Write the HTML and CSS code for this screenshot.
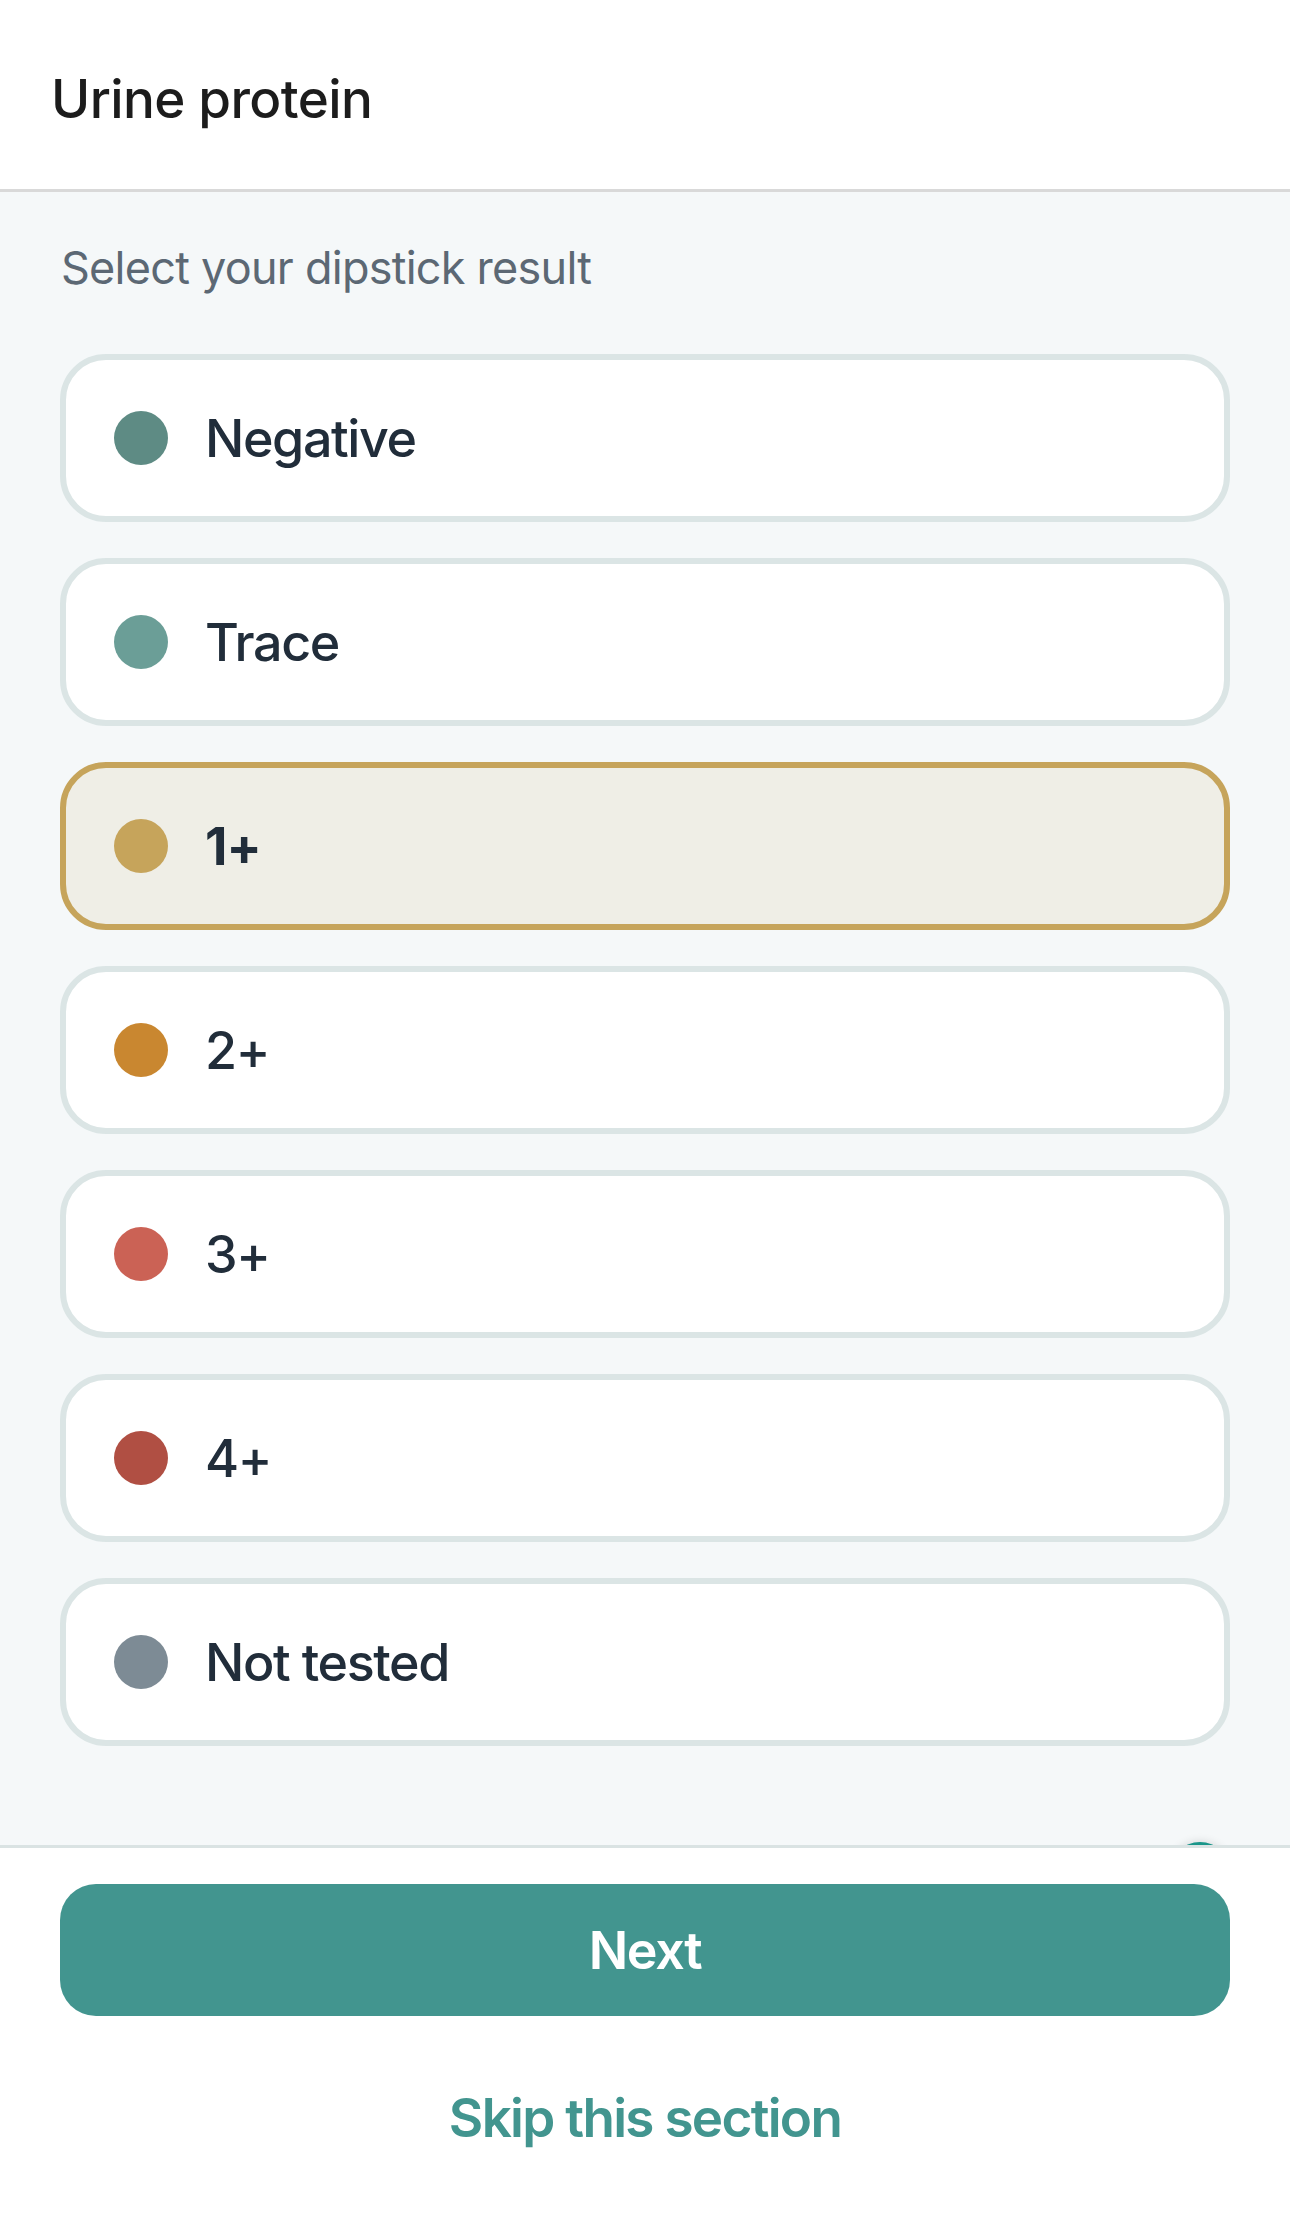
FILE: index.html
```html
<!DOCTYPE html>
<html lang="en">
<head>
    <meta charset="UTF-8">
    <meta name="viewport" content="width=device-width, initial-scale=1.0">
    <title>Urine protein</title>
    <link rel="stylesheet" href="styles.css">
</head>
<body>

<div class="page">
    <header class="topbar">
        <h1 class="title">Urine protein</h1>
    </header>

    <main class="content">
        <p class="prompt">Select your dipstick result</p>
        <div class="options">
            <button class="option"><span class="dot dot-negative"></span>Negative</button>
            <button class="option"><span class="dot dot-trace"></span>Trace</button>
            <button class="option selected"><span class="dot dot-one"></span>1+</button>
            <button class="option"><span class="dot dot-two"></span>2+</button>
            <button class="option"><span class="dot dot-three"></span>3+</button>
            <button class="option"><span class="dot dot-four"></span>4+</button>
            <button class="option"><span class="dot dot-none"></span>Not tested</button>
        </div>
        <div class="fab"></div>
    </main>

    <footer class="actions">
        <button class="next">Next</button>
        <button class="skip">Skip this section</button>
    </footer>
</div>

</body>
</html>
```

FILE: styles.css
```css
* {
    box-sizing: border-box;
}
body {
    margin: 0;
    font-family: Inter, "Noto Sans", sans-serif;
    background-color: #fff;
}
.page {
    height: 2220px;
    display: flex;
    flex-direction: column;
}
.topbar {
    height: 192px;
    flex-shrink: 0;
    display: flex;
    align-items: center;
    padding: 0 51px;
    background-color: #fff;
    border-bottom: 3px solid #d9d9d9;
}
.title {
    margin: 8px 0 0;
    font-size: 53px;
    font-weight: 500;
    letter-spacing: -0.6px;
    color: #1c1c1c;
}
.content {
    position: relative;
    flex: 1;
    overflow: hidden;
    background-color: #f5f8f9;
    padding: 49px 60px 0;
}
.prompt {
    margin: 0 0 59px 1px;
    font-size: 45px;
    line-height: 54px;
    letter-spacing: -0.75px;
    color: #5c6874;
}
.options {
    display: flex;
    flex-direction: column;
    gap: 36px;
}
.option {
    height: 168px;
    display: flex;
    align-items: center;
    gap: 37px;
    padding: 0 48px;
    background-color: #fff;
    border: 6px solid #dbe5e5;
    border-radius: 46px;
    font-family: inherit;
    font-size: 52px;
    font-weight: 500;
    letter-spacing: -1.4px;
    color: #212d3a;
    text-align: left;
    cursor: pointer;
}
.option.selected {
    background-color: #efeee6;
    border-color: #c6a45b;
    font-weight: 700;
    letter-spacing: -0.8px;
}
.dot {
    width: 54px;
    height: 54px;
    border-radius: 50%;
    flex-shrink: 0;
}
.dot-negative { background-color: #5e8b84; }
.dot-trace { background-color: #6b9e97; }
.dot-one { background-color: #c6a45b; }
.dot-two { background-color: #c98730; }
.dot-three { background-color: #cb6255; }
.dot-four { background-color: #b04f43; }
.dot-none { background-color: #7d8b95; }

/* floating help button, tucked under the footer */
.fab {
    position: absolute;
    right: 60px;
    bottom: -57px;
    width: 60px;
    height: 60px;
    border-radius: 50%;
    background-color: #1a968a;
    box-shadow: 0 0 10px rgba(0, 0, 0, 0.15);
}
.actions {
    position: relative;
    flex-shrink: 0;
    height: 375px;
    padding: 36px 60px 0;
    background-color: #fff;
    border-top: 3px solid #dae3e3;
    display: flex;
    flex-direction: column;
    align-items: center;
}
.next {
    width: 100%;
    height: 132px;
    border: none;
    border-radius: 36px;
    background-color: #42958f;
    color: #fff;
    font-family: inherit;
    font-size: 52px;
    font-weight: 600;
    letter-spacing: -1.3px;
    cursor: pointer;
}
.skip {
    margin-top: 69px;
    border: none;
    background: none;
    color: #42958f;
    font-family: inherit;
    font-size: 53px;
    font-weight: 600;
    letter-spacing: -1.7px;
    cursor: pointer;
}
```
